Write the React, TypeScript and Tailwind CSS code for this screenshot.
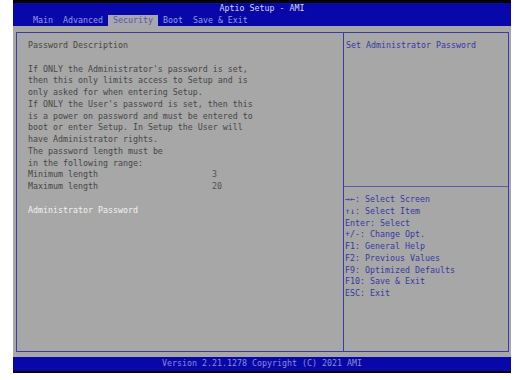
import React from 'react';

const descLines = [
  "If ONLY the Administrator's password is set,",
  'then this only limits access to Setup and is',
  'only asked for when entering Setup.',
  "If ONLY the User's password is set, then this",
  'is a power on password and must be entered to',
  'boot or enter Setup. In Setup the User will',
  'have Administrator rights.',
  'The password length must be',
  'in the following range:',
];

const helpLines = [
  '→←: Select Screen',
  '↑↓: Select Item',
  'Enter: Select',
  '+/-: Change Opt.',
  'F1: General Help',
  'F2: Previous Values',
  'F9: Optimized Defaults',
  'F10: Save & Exit',
  'ESC: Exit',
];

const tabs = ['Main', 'Advanced', 'Security', 'Boot', 'Save & Exit'];

export default function App() {
  return (
    <div
      className="w-[522px] h-[380px] bg-white pl-[13px] text-[8.3px] leading-[11.75px] whitespace-pre"
      style={{ fontFamily: '"DejaVu Sans Mono", "Liberation Mono", monospace' }}
    >
      <div className="w-[498px] h-[373px] flex flex-col bg-[#a7a7a7] border-t-[3px] border-b-[2px] border-black">
        {/* header */}
        <div className="h-[23px] bg-[#0808aa] flex flex-col">
          <div className="h-[12px] flex items-center justify-center text-[#d4d4e8]">Aptio Setup - AMI</div>
          <div className="flex-1 flex items-end pl-[15px]">
            {tabs.map((t) => (
              <div
                key={t}
                className={`h-[11px] px-[5px] flex items-center ${
                  t === 'Security' ? 'bg-[#a7a7ad] text-[#5656a6]' : 'text-[#9a9ae0]'
                }`}
              >
                {t}
              </div>
            ))}
          </div>
        </div>

        {/* body */}
        <div className="flex-1 pt-[6px] pb-[5px] pl-[3px] pr-[2px] flex">
          <div className="flex-1 flex border border-[#3c3c9c]">
            <div className="w-[327px] border-r border-[#3c3c9c] pl-[11px] pt-[7px] text-[#464646]">
              <div>Password Description</div>
              <div>&nbsp;</div>
              {descLines.map((l, i) => (
                <div key={i}>{l}</div>
              ))}
              <div className="flex">
                <span className="w-[184px]">Minimum length</span>
                <span className="text-[#525252]">3</span>
              </div>
              <div className="flex">
                <span className="w-[184px]">Maximum length</span>
                <span className="text-[#525252]">20</span>
              </div>
              <div>&nbsp;</div>
              <div className="text-[#f2f2f2]">Administrator Password</div>
            </div>
            <div className="flex-1 flex flex-col">
              <div className="h-[154px] border-b border-[#5a5aa6] pl-[2px] pt-[7px] text-[#3838a2]">
                Set Administrator Password
              </div>
              <div className="flex-1 pl-[1px] pt-[7px] text-[#3838a2]">
                {helpLines.map((l) => (
                  <div key={l}>{l}</div>
                ))}
              </div>
            </div>
          </div>
        </div>

        {/* footer */}
        <div className="h-[14px] bg-[#0808aa] flex items-center justify-center text-[#8a8ad4]">
          Version 2.21.1278 Copyright (C) 2021 AMI
        </div>
      </div>
    </div>
  );
}
